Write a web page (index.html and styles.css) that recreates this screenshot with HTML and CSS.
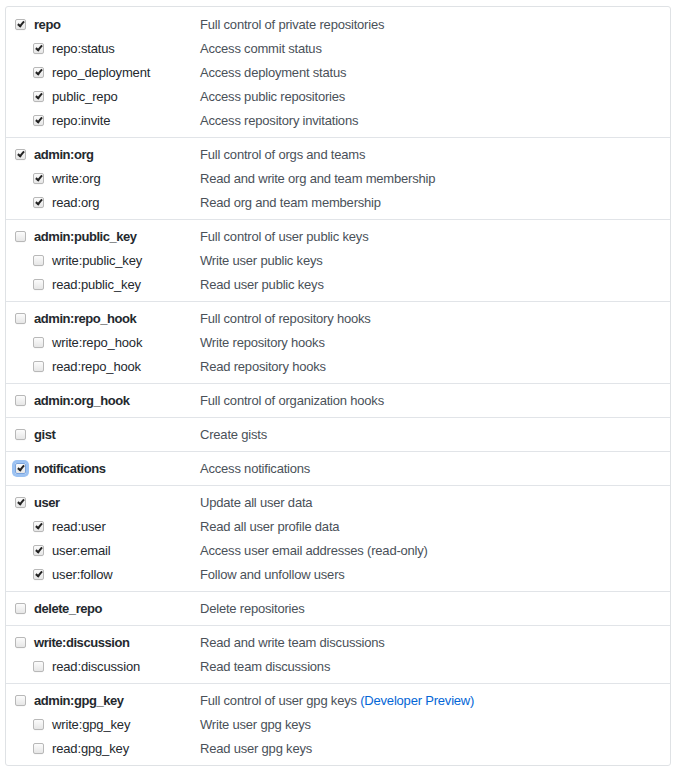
FILE: index.html
```html
<!DOCTYPE html>
<html>
<head>
<meta charset="utf-8">
<link rel="stylesheet" href="styles.css">
</head>
<body>
<div class="page">
  <div class="scopes">
    <div class="group">
      <div class="row"><span class="name parent"><span class="cb on"></span>repo</span><span class="desc">Full control of private repositories</span></div>
      <div class="row"><span class="name child"><span class="cb on"></span>repo:status</span><span class="desc">Access commit status</span></div>
      <div class="row"><span class="name child"><span class="cb on"></span>repo_deployment</span><span class="desc">Access deployment status</span></div>
      <div class="row"><span class="name child"><span class="cb on"></span>public_repo</span><span class="desc">Access public repositories</span></div>
      <div class="row"><span class="name child"><span class="cb on"></span>repo:invite</span><span class="desc">Access repository invitations</span></div>
    </div>
    <div class="group">
      <div class="row"><span class="name parent"><span class="cb on"></span>admin:org</span><span class="desc">Full control of orgs and teams</span></div>
      <div class="row"><span class="name child"><span class="cb on"></span>write:org</span><span class="desc">Read and write org and team membership</span></div>
      <div class="row"><span class="name child"><span class="cb on"></span>read:org</span><span class="desc">Read org and team membership</span></div>
    </div>
    <div class="group">
      <div class="row"><span class="name parent"><span class="cb"></span>admin:public_key</span><span class="desc">Full control of user public keys</span></div>
      <div class="row"><span class="name child"><span class="cb"></span>write:public_key</span><span class="desc">Write user public keys</span></div>
      <div class="row"><span class="name child"><span class="cb"></span>read:public_key</span><span class="desc">Read user public keys</span></div>
    </div>
    <div class="group">
      <div class="row"><span class="name parent"><span class="cb"></span>admin:repo_hook</span><span class="desc">Full control of repository hooks</span></div>
      <div class="row"><span class="name child"><span class="cb"></span>write:repo_hook</span><span class="desc">Write repository hooks</span></div>
      <div class="row"><span class="name child"><span class="cb"></span>read:repo_hook</span><span class="desc">Read repository hooks</span></div>
    </div>
    <div class="group">
      <div class="row"><span class="name parent"><span class="cb"></span>admin:org_hook</span><span class="desc">Full control of organization hooks</span></div>
    </div>
    <div class="group">
      <div class="row"><span class="name parent"><span class="cb"></span>gist</span><span class="desc">Create gists</span></div>
    </div>
    <div class="group">
      <div class="row"><span class="name parent"><span class="cb on focus"></span>notifications</span><span class="desc">Access notifications</span></div>
    </div>
    <div class="group">
      <div class="row"><span class="name parent"><span class="cb on"></span>user</span><span class="desc">Update all user data</span></div>
      <div class="row"><span class="name child"><span class="cb on"></span>read:user</span><span class="desc">Read all user profile data</span></div>
      <div class="row"><span class="name child"><span class="cb on"></span>user:email</span><span class="desc">Access user email addresses (read-only)</span></div>
      <div class="row"><span class="name child"><span class="cb on"></span>user:follow</span><span class="desc">Follow and unfollow users</span></div>
    </div>
    <div class="group">
      <div class="row"><span class="name parent"><span class="cb"></span>delete_repo</span><span class="desc">Delete repositories</span></div>
    </div>
    <div class="group">
      <div class="row"><span class="name parent"><span class="cb"></span>write:discussion</span><span class="desc">Read and write team discussions</span></div>
      <div class="row"><span class="name child"><span class="cb"></span>read:discussion</span><span class="desc">Read team discussions</span></div>
    </div>
    <div class="group">
      <div class="row"><span class="name parent"><span class="cb"></span>admin:gpg_key</span><span class="desc">Full control of user gpg keys <a class="preview" href="#">(Developer Preview)</a></span></div>
      <div class="row"><span class="name child"><span class="cb"></span>write:gpg_key</span><span class="desc">Write user gpg keys</span></div>
      <div class="row"><span class="name child"><span class="cb"></span>read:gpg_key</span><span class="desc">Read user gpg keys</span></div>
    </div>
  </div>
</div>
</body>
</html>
```
FILE: styles.css
```css
html, body {
  margin: 0;
  padding: 0;
  background: #ffffff;
}
body {
  font-family: "Liberation Sans", Arial, Helvetica, sans-serif;
  font-size: 13px;
  color: #24292e;
}
.page {
  padding: 6px 7px 0 5px;
}
.scopes {
  border: 1px solid #dfe2e5;
  border-radius: 3px;
  background: #fff;
}
.group {
  padding: 4px 0 5px;
  border-top: 1px solid #e1e4e8;
}
.group:first-child {
  border-top: 0;
  padding-top: 5px;
}
.row {
  display: grid;
  grid-template-columns: 185px 1fr;
  height: 24px;
  align-items: center;
  padding-left: 9px;
}
.name {
  display: flex;
  align-items: center;
  white-space: nowrap;
}
.parent {
  font-weight: bold;
  color: #24292e;
  letter-spacing: -0.45px;
}
.child {
  padding-left: 18px;
  color: #24292e;
  letter-spacing: -0.15px;
}
.desc {
  color: #4a5159;
  white-space: nowrap;
  letter-spacing: -0.2px;
}
.preview {
  color: #0366d6;
  text-decoration: none;
}
.cb {
  position: relative;
  box-sizing: border-box;
  width: 11px;
  height: 11px;
  margin-right: 8px;
  flex: none;
  letter-spacing: 0;
  border: 1px solid #b8b8b8;
  border-radius: 2px;
  background: linear-gradient(#fcfcfc, #e6e6e6);
  box-shadow: 0 0.5px 0 rgba(0,0,0,0.05);
}
.cb.on::after {
  content: "";
  position: absolute;
  left: 3px;
  top: 0px;
  width: 2px;
  height: 5px;
  border: solid #222;
  border-width: 0 2px 2px 0;
  transform: rotate(40deg);
}
.cb.focus {
  box-shadow: 0 0 0 3px #9cc2f2;
  border-color: #7aa3dc;
}
```
